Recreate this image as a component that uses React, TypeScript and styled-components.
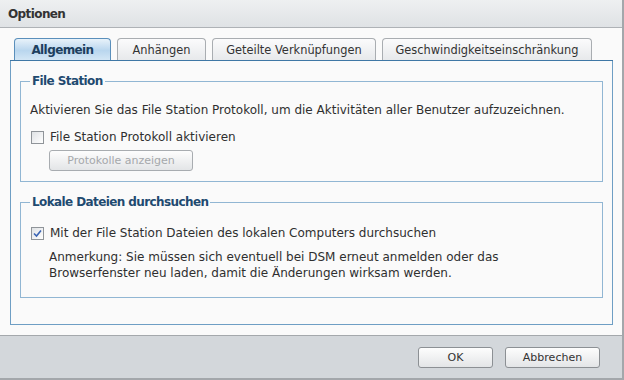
import React from 'react';
import styled, { createGlobalStyle } from 'styled-components';

const GlobalStyle = createGlobalStyle`
  html, body {
    margin: 0;
    padding: 0;
    background: #ffffff;
  }
  body {
    font-family: 'DejaVu Sans', Verdana, sans-serif;
    font-size: 12px;
    color: #2f2f2f;
  }
`;

const Window = styled.div`
  width: 622px;
  height: 378px;
  display: flex;
  flex-direction: column;
  border-right: 2px solid #a3a7ab;
  border-bottom: 2px solid #a3a7ab;
  background: #fafafa;
`;

const TitleBar = styled.div`
  height: 27px;
  flex: none;
  display: flex;
  align-items: center;
  padding-left: 8px;
  background: linear-gradient(#eef0f1, #dfe2e5);
  border-bottom: 1px solid #aeb2b6;
  font-weight: bold;
  letter-spacing: -0.6px;
  color: #333;
`;

const Body = styled.div`
  flex: 1;
  padding: 10px 8px 10px 10px;
  display: flex;
  flex-direction: column;
`;

const TabStrip = styled.div`
  display: flex;
  gap: 6px;
  padding-left: 4px;
  height: 22px;
  border-bottom: 1px solid #3f77a5;
  width: 599px;
`;

const Tab = styled.div<{ $active?: boolean; $w: number }>`
  width: ${(p) => p.$w}px;
  height: 22px;
  box-sizing: border-box;
  display: flex;
  align-items: center;
  justify-content: center;
  border: 1px solid ${(p) => (p.$active ? '#5a8fbb' : '#a9adb1')};
  border-bottom: none;
  border-radius: 4px 4px 0 0;
  background: ${(p) =>
    p.$active
      ? 'linear-gradient(#e8f2fa, #b9d6ee 55%, #d3e6f5)'
      : 'linear-gradient(#fbfbfc, #e7e9eb)'};
  font-size: ${(p) => (p.$active ? '12px' : '11.4px')};
  font-weight: ${(p) => (p.$active ? 'bold' : 'normal')};
  letter-spacing: ${(p) => (p.$active ? '-0.6px' : '0')};
  color: ${(p) => (p.$active ? '#1d3f5e' : '#333')};
`;

const Panel = styled.div`
  width: 583px;
  height: 250px;
  border: 1px solid #6e9ec4;
  border-top: none;
  padding: 13px 9px 0 9px;
  display: flex;
  flex-direction: column;
  gap: 13px;
`;

const Group = styled.fieldset<{ $h: number }>`
  margin: 0;
  height: ${(p) => p.$h}px;
  box-sizing: border-box;
  border: 1px solid #91b6d3;
  padding: 0 0 0 9px;
  display: flex;
  flex-direction: column;
`;

const Legend = styled.legend`
  padding: 0 2px;
  font-weight: bold;
  letter-spacing: -0.6px;
  line-height: 14px;
  color: #1f4a70;
`;

const Text = styled.div<{ $top?: number }>`
  margin-top: ${(p) => p.$top ?? 0}px;
  line-height: 16px;
`;

const CheckRow = styled.label<{ $top: number }>`
  display: flex;
  align-items: center;
  gap: 6px;
  margin-top: ${(p) => p.$top}px;
  line-height: 16px;
`;

const Box = styled.span`
  width: 13px;
  height: 13px;
  box-sizing: border-box;
  margin-left: 1px;
  border: 1px solid #8f9499;
  background: linear-gradient(135deg, #dfe2e5, #ffffff);
  display: flex;
  align-items: center;
  justify-content: center;
`;

const Note = styled.div`
  margin: 8px 0 0 19px;
  line-height: 16px;
`;

const Button = styled.button<{ $w: number; $disabled?: boolean }>`
  width: ${(p) => p.$w}px;
  height: 21px;
  padding: 0;
  border: 1px solid ${(p) => (p.$disabled ? '#a8acb0' : '#8c9094')};
  border-radius: 3px;
  background: linear-gradient(#fdfdfd, #e3e5e7);
  font-family: 'DejaVu Sans', Verdana, sans-serif;
  font-size: 11px;
  color: ${(p) => (p.$disabled ? '#a5a8ab' : '#333')};
`;

const IndentButton = styled(Button)`
  margin: 5px 0 0 19px;
`;

const Footer = styled.div`
  height: 43px;
  flex: none;
  border-top: 1px solid #a4a8ac;
  background: #d3d7db;
  display: flex;
  justify-content: flex-end;
  align-items: flex-start;
  gap: 12px;
  padding: 11px 22px 0 0;
  box-sizing: border-box;
`;

const Check = () => (
  <svg width="9" height="9" viewBox="0 0 9 9">
    <path d="M1 4.5 L3.5 7 L8 1.5" fill="none" stroke="#3a64b4" strokeWidth="1.6" />
  </svg>
);

const App: React.FC = () => (
  <>
    <GlobalStyle />
    <Window>
      <TitleBar>Optionen</TitleBar>
      <Body>
        <TabStrip>
          <Tab $active $w={97}>Allgemein</Tab>
          <Tab $w={89}>Anhängen</Tab>
          <Tab $w={164}>Geteilte Verknüpfungen</Tab>
          <Tab $w={210}>Geschwindigkeitseinschränkung</Tab>
        </TabStrip>
        <Panel>
          <Group $h={108}>
            <Legend>File Station</Legend>
            <Text $top={14}>
              Aktivieren Sie das File Station Protokoll, um die Aktivitäten aller Benutzer aufzuzeichnen.
            </Text>
            <CheckRow $top={11}>
              <Box />
              File Station Protokoll aktivieren
            </CheckRow>
            <IndentButton $w={144} $disabled disabled>
              Protokolle anzeigen
            </IndentButton>
          </Group>
          <Group $h={103}>
            <Legend>Lokale Dateien durchsuchen</Legend>
            <CheckRow $top={16}>
              <Box>
                <Check />
              </Box>
              Mit der File Station Dateien des lokalen Computers durchsuchen
            </CheckRow>
            <Note>
              Anmerkung: Sie müssen sich eventuell bei DSM erneut anmelden oder das
              <br />
              Browserfenster neu laden, damit die Änderungen wirksam werden.
            </Note>
          </Group>
        </Panel>
      </Body>
      <Footer>
        <Button $w={75}>OK</Button>
        <Button $w={95}>Abbrechen</Button>
      </Footer>
    </Window>
  </>
);

export default App;
